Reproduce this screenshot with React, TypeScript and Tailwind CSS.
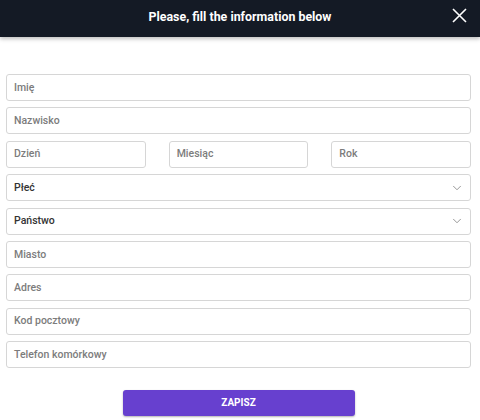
import { ChevronDown } from "lucide-react";

const font = { fontFamily: "Roboto, 'Liberation Sans', sans-serif" };

function Field({ placeholder }: { placeholder: string }) {
  return (
    <div className="h-[27px] flex items-center px-[7px] border border-[#d6d6d6] rounded-[3px] bg-white text-[10.5px] font-medium text-[#7c7c7c]">
      {placeholder}
    </div>
  );
}

function SelectField({ label }: { label: string }) {
  return (
    <div className="h-[27px] flex items-center justify-between pl-[7px] pr-[6px] border border-[#d6d6d6] rounded-[3px] bg-white text-[10.5px] font-medium text-[#333]">
      <span>{label}</span>
      <ChevronDown size={14} strokeWidth={1.3} className="text-[#777]" />
    </div>
  );
}

export default function App() {
  return (
    <div style={font} className="w-[480px] h-[420px] bg-white overflow-hidden">
      <header className="relative h-[37px] pb-[3px] bg-[#141a25] flex items-center justify-center shadow-[0_2px_4px_rgba(0,0,0,0.25)]">
        <h1 className="text-white text-[12.4px] font-bold">Please, fill the information below</h1>
        <svg
          className="absolute right-[13px] top-[8px]"
          width="15"
          height="15"
          viewBox="0 0 15 15"
          fill="none"
          stroke="white"
          strokeWidth="1.6"
        >
          <path d="M1 1L14 14M14 1L1 14" />
        </svg>
      </header>

      <form className="px-[6px] pt-[37px] flex flex-col gap-[6.4px] w-[477px]">
        <Field placeholder="Imię" />
        <Field placeholder="Nazwisko" />
        <div className="grid grid-cols-3 gap-[23px]">
          <Field placeholder="Dzień" />
          <Field placeholder="Miesiąc" />
          <Field placeholder="Rok" />
        </div>
        <SelectField label="Płeć" />
        <SelectField label="Państwo" />
        <Field placeholder="Miasto" />
        <Field placeholder="Adres" />
        <Field placeholder="Kod pocztowy" />
        <Field placeholder="Telefon komórkowy" />
        <div className="flex justify-center mt-[15px]">
          <button
            type="button"
            className="w-[232px] h-[26px] rounded-[3px] bg-[#6740cf] text-white text-[10px] font-bold shadow-[0_1px_2px_rgba(0,0,0,0.3)]"
          >
            ZAPISZ
          </button>
        </div>
      </form>
    </div>
  );
}
